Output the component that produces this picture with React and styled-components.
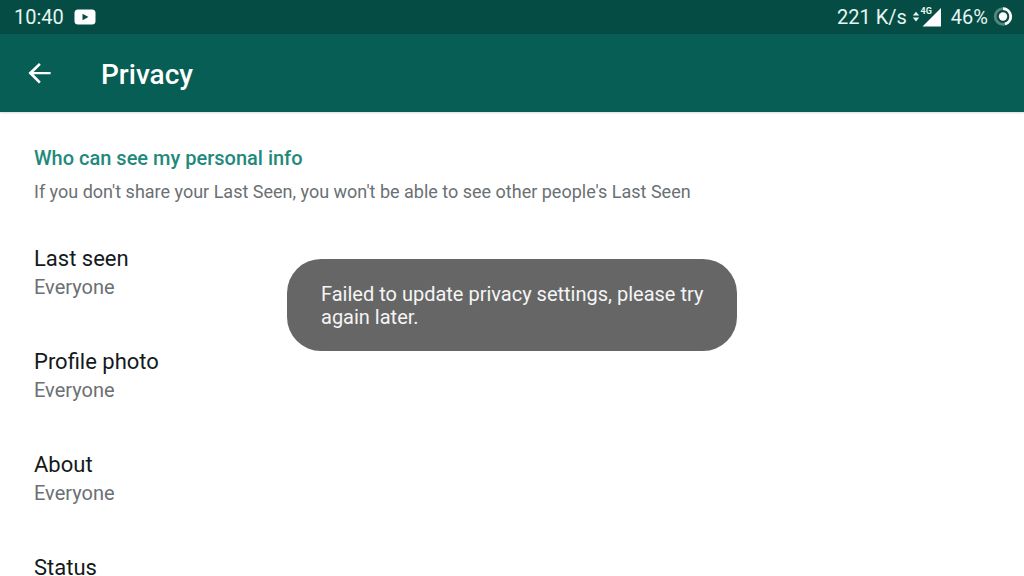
import React from 'react';
import styled, { createGlobalStyle } from 'styled-components';

const GlobalStyle = createGlobalStyle`
  * {
    box-sizing: border-box;
  }

  body {
    margin: 0;
    background: #ffffff;
    font-family: Roboto, "Liberation Sans", sans-serif;
  }
`;

const Page = styled.div`
  display: flex;
  flex-direction: column;
  height: 100vh;
`;

const StatusBar = styled.div`
  display: flex;
  flex: none;
  justify-content: space-between;
  align-items: center;
  height: 34px;
  padding: 0 11px 0 14px;
  background: #054d44;
  color: #e6f5f2;
  font-size: 20px;
  line-height: 24px;
`;

const StatusGroup = styled.div`
  display: flex;
  align-items: center;
  gap: ${({ $gap }) => $gap}px;
`;

const AppBar = styled.header`
  display: flex;
  flex: none;
  align-items: center;
  gap: 46px;
  height: 78px;
  padding: 0 24px;
  background: #075e54;
  box-shadow: 0 1px 2px rgba(0, 0, 0, 0.15);
  z-index: 1;
`;

const BackButton = styled.button`
  display: flex;
  padding: 0;
  border: none;
  background: none;
  color: #ffffff;
  cursor: pointer;
`;

const Title = styled.h1`
  margin: 0;
  padding-top: 3px;
  color: #ffffff;
  font-size: 28px;
  font-weight: 500;
  line-height: 32px;
`;

const Content = styled.main`
  flex: 1;
  padding-top: 34px;
  overflow-y: auto;
  scrollbar-width: none;
`;

const SectionHeading = styled.h2`
  margin: 0;
  padding: 0 34px;
  color: #1f8a7b;
  font-size: 20px;
  font-weight: 500;
  line-height: 24px;
`;

const SectionNote = styled.p`
  margin: 10px 0 24px;
  padding: 0 34px;
  color: #6b7073;
  font-size: 18px;
  line-height: 24px;
`;

const SettingList = styled.ul`
  margin: 0;
  padding: 0;
  list-style: none;
`;

const SettingRow = styled.button`
  display: flex;
  flex-direction: column;
  gap: 2px;
  width: 100%;
  padding: 17px 34px 32px;
  border: none;
  background: none;
  font-family: inherit;
  text-align: left;
  cursor: pointer;
`;

const SettingName = styled.span`
  color: #14191c;
  font-size: 22px;
  line-height: 28px;
`;

const SettingValue = styled.span`
  color: #6b7073;
  font-size: 20px;
  line-height: 24px;
`;

const Toast = styled.div`
  position: fixed;
  top: 45vh;
  left: 50%;
  width: 450px;
  max-width: 90vw;
  padding: 24px 33px 22px 34px;
  border-radius: 34px;
  background: #666666;
  color: #f5f5f5;
  font-size: 20px;
  line-height: 23px;
  transform: translateX(-50%);
`;

const settings = [
  { name: 'Last seen', value: 'Everyone' },
  { name: 'Profile photo', value: 'Everyone' },
  { name: 'About', value: 'Everyone' },
  { name: 'Status', value: 'Everyone' },
];

const VideoIcon = () => (
  <svg width="22" height="16" viewBox="0 0 22 16" aria-hidden="true">
    <rect x="0.5" y="0.5" width="21" height="15" rx="3.5" fill="#ffffff" />
    <path d="M8.5 4.8v6.4l6-3.2z" fill="#054d44" />
  </svg>
);

const SignalIcon = () => (
  <svg width="30" height="22" viewBox="0 0 30 22" aria-hidden="true">
    <path d="M0.8 9.6L4 5.8l3.2 3.8zM0.8 11.6L4 15.4l3.2-3.8z" fill="#e6f5f2" />
    <path d="M29 2V20.5H10.5z" fill="#ffffff" />
    <path d="M8 0h12.5v8.6H8z" fill="#054d44" />
    <text x="8.5" y="8" fill="#e6f5f2" fontSize="9" fontWeight="700">4G</text>
  </svg>
);

const BatteryIcon = () => (
  <svg width="20" height="20" viewBox="0 0 20 20" aria-hidden="true">
    <circle cx="10" cy="9.5" r="7.8" fill="none" stroke="#56877f" strokeWidth="2.8" />
    <path d="M10 1.7a7.8 7.8 0 0 1 2 15.3" fill="none" stroke="#ffffff" strokeWidth="2.8" />
    <circle cx="10" cy="9.5" r="4.2" fill="#ffffff" />
  </svg>
);

const BackIcon = () => (
  <svg width="31" height="31" viewBox="0 0 24 24" aria-hidden="true">
    <path d="M20.6 10.8H7.4L13 5.2l-1.4-1.4L3.4 11.7l8.2 8.1 1.4-1.4-5.6-5.8h13.2z" fill="currentColor" />
  </svg>
);

const App = () => {
  return (
    <Page>
      <GlobalStyle />
      <StatusBar>
        <StatusGroup $gap={10}>
          <span>10:40</span>
          <VideoIcon />
        </StatusGroup>
        <StatusGroup $gap={5}>
          <span>221 K/s</span>
          <StatusGroup $gap={9}>
            <SignalIcon />
            <StatusGroup $gap={5}>
              <span>46%</span>
              <BatteryIcon />
            </StatusGroup>
          </StatusGroup>
        </StatusGroup>
      </StatusBar>
      <AppBar>
        <BackButton type="button" aria-label="Back">
          <BackIcon />
        </BackButton>
        <Title>Privacy</Title>
      </AppBar>
      <Content>
        <SectionHeading>Who can see my personal info</SectionHeading>
        <SectionNote>
          If you don't share your Last Seen, you won't be able to see other people's Last Seen
        </SectionNote>
        <SettingList>
          {settings.map((setting) => (
            <li key={setting.name}>
              <SettingRow type="button">
                <SettingName>{setting.name}</SettingName>
                <SettingValue>{setting.value}</SettingValue>
              </SettingRow>
            </li>
          ))}
        </SettingList>
      </Content>
      <Toast role="status">Failed to update privacy settings, please try again later.</Toast>
    </Page>
  );
};

export default App;
